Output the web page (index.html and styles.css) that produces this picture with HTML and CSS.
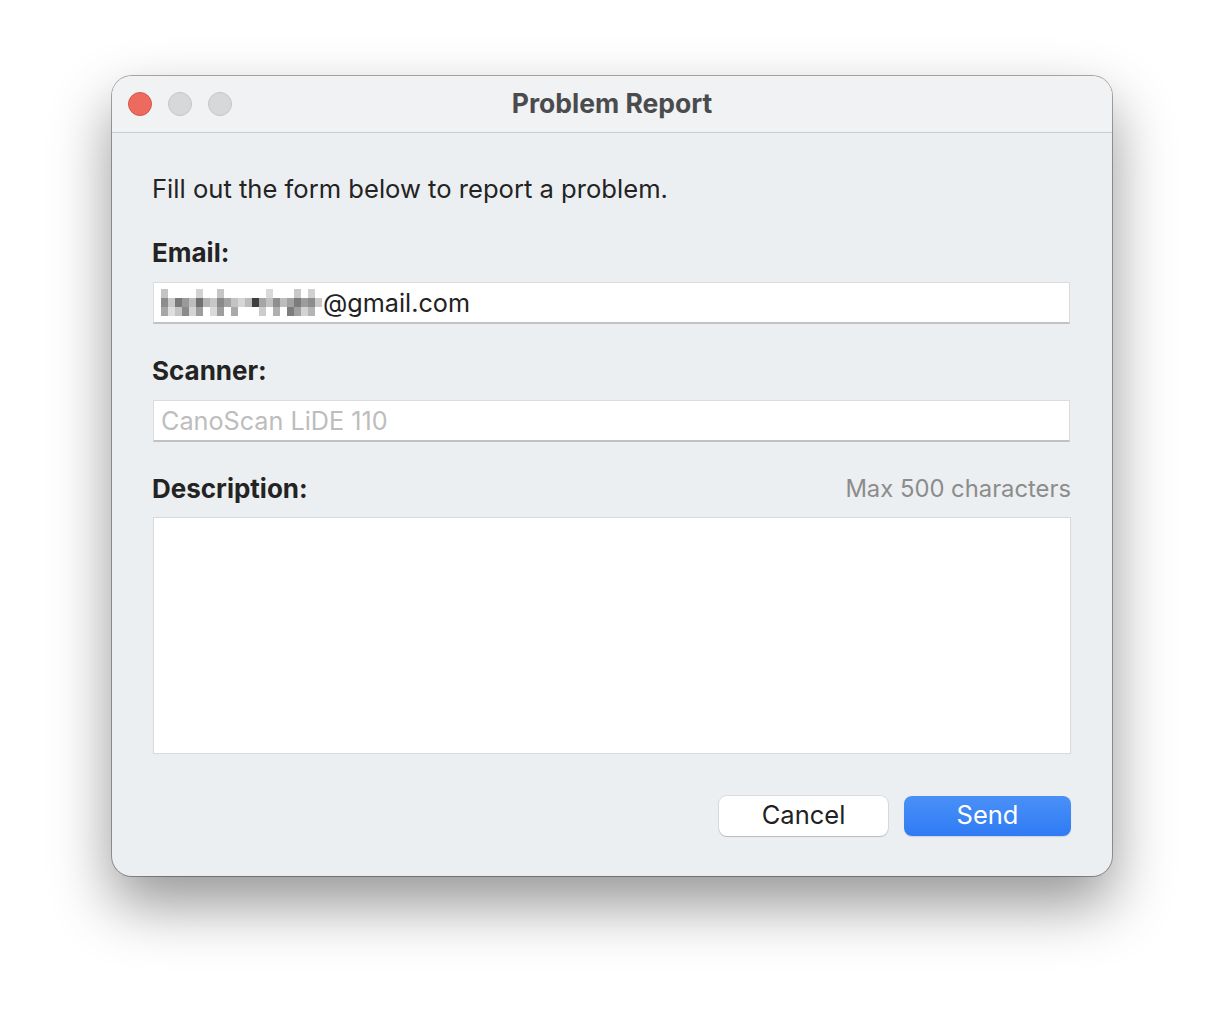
FILE: index.html
```html
<!DOCTYPE html>
<html>
<head>
<meta charset="utf-8">
<link rel="stylesheet" href="styles.css">
</head>
<body>
<div class="window">
  <div class="titlebar">
    <div class="lights">
      <span class="light red"></span>
      <span class="light gray"></span>
      <span class="light gray"></span>
    </div>
    <div class="title">Problem Report</div>
  </div>
  <div class="content">
    <p class="intro">Fill out the form below to report a problem.</p>
    <div class="label email-label">Email:</div>
    <div class="field">
      <svg class="redact" width="162" height="27" viewBox="0 0 162 27">
        <rect x="0" y="0" width="7" height="9" fill="#c4c4c4"/>
        <rect x="0" y="9" width="7" height="9" fill="#8d8d8d"/>
        <rect x="0" y="18" width="7" height="9" fill="#a6a6a6"/>
        <rect x="7" y="9" width="7" height="9" fill="#c9c9c9"/>
        <rect x="7" y="18" width="7" height="9" fill="#dedede"/>
        <rect x="14" y="9" width="7" height="9" fill="#7a7a7a"/>
        <rect x="14" y="18" width="7" height="9" fill="#c4c4c4"/>
        <rect x="21" y="9" width="7" height="9" fill="#9a9a9a"/>
        <rect x="21" y="18" width="7" height="9" fill="#8a8a8a"/>
        <rect x="28" y="9" width="7" height="9" fill="#bdbdbd"/>
        <rect x="28" y="18" width="7" height="9" fill="#d4d4d4"/>
        <rect x="35" y="0" width="7" height="9" fill="#d2d2d2"/>
        <rect x="35" y="9" width="7" height="9" fill="#6f6f6f"/>
        <rect x="35" y="18" width="7" height="9" fill="#9c9c9c"/>
        <rect x="42" y="9" width="7" height="9" fill="#b3b3b3"/>
        <rect x="49" y="9" width="7" height="9" fill="#c7c7c7"/>
        <rect x="49" y="18" width="7" height="9" fill="#dadada"/>
        <rect x="56" y="0" width="7" height="9" fill="#c6c6c6"/>
        <rect x="56" y="9" width="7" height="9" fill="#8a8a8a"/>
        <rect x="56" y="18" width="7" height="9" fill="#9e9e9e"/>
        <rect x="63" y="9" width="7" height="9" fill="#a4a4a4"/>
        <rect x="70" y="9" width="7" height="9" fill="#c3c3c3"/>
        <rect x="70" y="18" width="7" height="9" fill="#a9a9a9"/>
        <rect x="77" y="9" width="7" height="9" fill="#d6d6d6"/>
        <rect x="84" y="9" width="7" height="9" fill="#bcbcbc"/>
        <rect x="91" y="9" width="7" height="9" fill="#3e3e3e"/>
        <rect x="98" y="9" width="7" height="9" fill="#a5a5a5"/>
        <rect x="98" y="18" width="7" height="9" fill="#cccccc"/>
        <rect x="105" y="9" width="7" height="9" fill="#c1c1c1"/>
        <rect x="105" y="0" width="7" height="9" fill="#d9d9d9"/>
        <rect x="112" y="9" width="7" height="9" fill="#8f8f8f"/>
        <rect x="112" y="18" width="7" height="9" fill="#b0b0b0"/>
        <rect x="119" y="9" width="7" height="9" fill="#bdbdbd"/>
        <rect x="126" y="9" width="7" height="9" fill="#a2a2a2"/>
        <rect x="126" y="18" width="7" height="9" fill="#7d7d7d"/>
        <rect x="133" y="0" width="7" height="9" fill="#c9c9c9"/>
        <rect x="133" y="9" width="7" height="9" fill="#7c7c7c"/>
        <rect x="133" y="18" width="7" height="9" fill="#a0a0a0"/>
        <rect x="140" y="9" width="7" height="9" fill="#9d9d9d"/>
        <rect x="140" y="18" width="7" height="9" fill="#d3d3d3"/>
        <rect x="147" y="0" width="7" height="9" fill="#d0d0d0"/>
        <rect x="147" y="9" width="7" height="9" fill="#8c8c8c"/>
        <rect x="147" y="18" width="7" height="9" fill="#b4b4b4"/>
        <rect x="154" y="9" width="7" height="9" fill="#c8c8c8"/>
      </svg><span class="value">@gmail.com</span>
    </div>
    <div class="label">Scanner:</div>
    <div class="field"><span class="placeholder">CanoScan LiDE 110</span></div>
    <div class="label-row">
      <div class="label nomargin">Description:</div>
      <div class="hint">Max 500 characters</div>
    </div>
    <div class="textarea"></div>
    <div class="buttons">
      <button class="btn cancel">Cancel</button>
      <button class="btn send">Send</button>
    </div>
  </div>
</div>
</body>
</html>
```

FILE: styles.css
```css
html, body {
  margin: 0;
  padding: 0;
  background: #ffffff;
}
body {
  width: 1224px;
  height: 1024px;
  overflow: hidden;
  font-family: Inter, "Noto Sans", "Liberation Sans", sans-serif;
  color: #222222;
}
.window {
  margin: 76px 0 0 112px;
  width: 1000px;
  height: 800px;
  border-radius: 20px;
  overflow: hidden;
  background: #eceff1;
  box-shadow: 0 0 0 1px rgba(0, 0, 0, 0.32), 0 28px 60px rgba(0, 0, 0, 0.42);
  display: flex;
  flex-direction: column;
}
.titlebar {
  height: 56px;
  flex: none;
  background: #f0f2f4;
  border-bottom: 1px solid #c9cbcd;
  display: flex;
  align-items: center;
  position: relative;
}
.lights {
  display: flex;
  gap: 16px;
  padding-left: 16px;
  position: relative;
  z-index: 1;
}
.light {
  width: 24px;
  height: 24px;
  border-radius: 50%;
  box-sizing: border-box;
}
.light.red {
  background: #ed6a5e;
  border: 1px solid #d4564b;
}
.light.gray {
  background: #d6d8da;
  border: 1px solid #c2c4c6;
}
.title {
  position: absolute;
  left: 0;
  right: 0;
  top: 0;
  text-align: center;
  font-weight: 700;
  font-size: 26.5px;
  color: #4b4b4d;
  line-height: 54px;
}
.content {
  padding: 41px 41px 0 40px;
  display: flex;
  flex-direction: column;
}
.intro {
  margin: 0;
  font-size: 25.6px;
  line-height: 30px;
  color: #232323;
}
.label {
  margin-top: 32px;
  font-size: 26px;
  font-weight: 700;
  line-height: 30px;
  color: #232323;
}
.email-label {
  margin-top: 34px;
}
.label.nomargin {
  margin-top: 0;
}
.field {
  margin-top: 14px;
  height: 42px;
  box-sizing: border-box;
  background: #ffffff;
  border: 1px solid #dcdcdc;
  border-bottom: 2px solid #c2c2c2;
  margin-left: 1px;
  margin-right: 1px;
  display: flex;
  align-items: center;
  padding-left: 7px;
  font-size: 25.2px;
}
.redact {
  display: block;
  flex: none;
}
.value {
  color: #222222;
}
.placeholder {
  color: #bdbdbd;
}
.label-row {
  margin-top: 32px;
  display: flex;
  justify-content: space-between;
  align-items: center;
}
.hint {
  font-size: 23.8px;
  color: #8c8c8c;
  line-height: 30px;
}
.textarea {
  margin-top: 13px;
  margin-left: 1px;
  height: 237px;
  box-sizing: border-box;
  background: #ffffff;
  border: 1px solid #d9d9d9;
}
.buttons {
  margin-top: 42px;
  display: flex;
  justify-content: flex-end;
  gap: 16px;
}
.btn {
  height: 40px;
  border-radius: 8px;
  font-family: Inter, "Noto Sans", "Liberation Sans", sans-serif;
  font-size: 25.5px;
  padding: 0 0 3px 0;
  border: none;
}
.cancel {
  width: 169px;
  background: #ffffff;
  color: #222222;
  box-shadow: 0 0 0 1px rgba(0, 0, 0, 0.08), 0 1px 1px rgba(0, 0, 0, 0.15);
}
.send {
  width: 167px;
  background: linear-gradient(#4a90f7, #2f7bf5);
  color: #ffffff;
  box-shadow: 0 1px 1px rgba(0, 0, 0, 0.12);
}
```
